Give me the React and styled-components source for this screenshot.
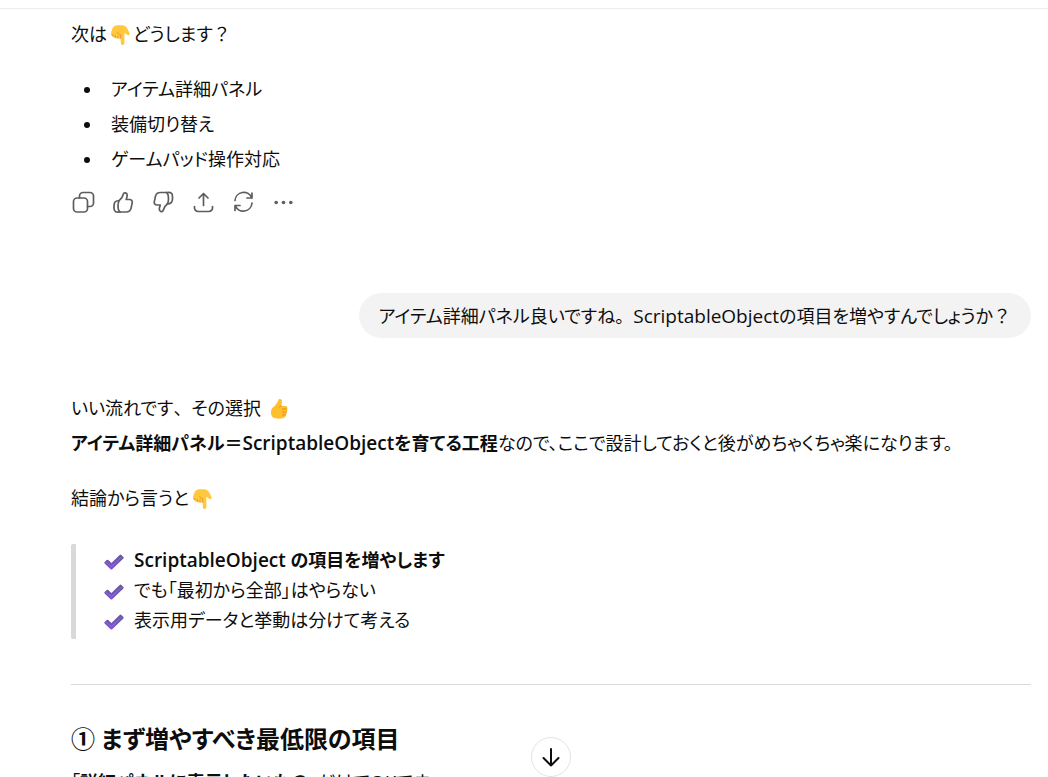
import React from "react"
import styled, { createGlobalStyle } from "styled-components"

const colors = {
  text: "#0d0d0d",
  icon: "#5d5d5d",
  bubble: "#f3f3f3",
  line: "#ededed",
  rule: "#d9d9d9",
  ring: "#e3e3e3",
  white: "#ffffff",
}

const GlobalStyle = createGlobalStyle`
  * {
    box-sizing: border-box;
  }

  body {
    margin: 0;
    background: ${colors.white};
    color: ${colors.text};
    font-family: "Open Sans", "Noto Sans CJK JP", sans-serif;
    font-size: 18px;
    line-height: 35px;
    font-feature-settings: "palt";
  }
`

const Page = styled.div`
  display: flex;
  flex-direction: column;
  height: 100vh;
  overflow: hidden;
  position: relative;
`

const TopBar = styled.header`
  flex: none;
  height: 9px;
  border-bottom: 1px solid ${colors.line};
`

const Thread = styled.main`
  flex: 1;
  min-height: 0;
  overflow: hidden;
  padding: 8px 17px 0 71px;
`

const Message = styled.article`
  display: flex;
  flex-direction: column;
`

const Paragraph = styled.p`
  margin: 0 0 20px;
`

const List = styled.ul`
  margin: 0;
  padding-left: 32px;

  & > li {
    padding-left: 8px;
  }
`

const Actions = styled.div`
  display: flex;
  margin: 5px 0 0 -8px;
`

const IconButton = styled.button`
  display: flex;
  align-items: center;
  justify-content: center;
  width: 40px;
  height: 40px;
  padding: 0;
  border: 0;
  border-radius: 8px;
  background: none;
  color: ${colors.icon};
  cursor: pointer;

  &:hover {
    background: ${colors.bubble};
  }
`

const Bubble = styled.div`
  align-self: flex-end;
  margin: 71px 0 53px;
  padding: 8px 20px 7px;
  border-radius: 23px;
  background: ${colors.bubble};
  line-height: 30px;
`

const Quote = styled.blockquote`
  margin: 8px 0 45px;
  padding: 1px 0 4px 28px;
  border-left: 5px solid ${colors.rule};
  border-radius: 2px;
  line-height: 30px;
`

const QuoteLine = styled.div`
  display: flex;
  align-items: center;
  gap: 10px;
`

const CheckMark = styled.svg`
  flex: none;
  width: 20px;
  height: 16px;
  margin-top: 4px;
`

const Rule = styled.hr`
  width: 100%;
  margin: 0 0 36px;
  border: 0;
  border-top: 1px solid ${colors.rule};
`

const Heading = styled.h2`
  margin: 0 0 8px;
  font-size: 24px;
  font-weight: 600;
  line-height: 36px;
`

const Strong = styled.strong`
  font-weight: 600;
`

const Latin = styled.span`
  font-size: 19px;
`

const Wide = styled.span`
  font-feature-settings: normal;
`

const Emoji = styled.svg`
  width: 22px;
  height: 22px;
  margin: 0 2px;
  vertical-align: -5px;
`

const ScrollButton = styled.button`
  position: absolute;
  bottom: 0;
  left: calc(50% + 27px);
  transform: translateX(-50%);
  display: flex;
  align-items: center;
  justify-content: center;
  width: 40px;
  height: 40px;
  padding: 0;
  border: 1px solid ${colors.ring};
  border-radius: 50%;
  background: ${colors.white};
  color: ${colors.text};
  cursor: pointer;
`

const Icon = ({ children, size = 24 }) => (
  <svg
    width={size}
    height={size}
    viewBox="0 0 24 24"
    fill="none"
    stroke="currentColor"
    strokeWidth="1.7"
    strokeLinecap="round"
    strokeLinejoin="round"
    aria-hidden="true"
  >
    {children}
  </svg>
)

const PointDown = () => (
  <Emoji viewBox="0 0 22 22" role="img" aria-label="下">
    <path
      fill="#ffc83d"
      d="M3 5.500C4 2.500 6 1.200 9 1.200h3.500c3 0 5 1.600 6.200 4l1.800 3.900c.8 1.700-1 2.800-2.300 1.700L15.400 8.700v10.600c0 2.300-3.400 2.300-3.500 0L11.600 14c-.8.900-2.100.9-2.800.2-.9.500-2 .3-2.500-.5-1.200.4-2.300-.3-2.500-1.400C2.200 12 1.700 10.900 2 9.500z"
    />
    <path
      fill="none"
      stroke="#e68a2e"
      strokeWidth="0.8"
      strokeLinecap="round"
      d="M3.900 12.200v-1.700M6.400 13.500v-2M9 14v-2M11.700 14.500v-3.700c-2-.5-2.900-1.400-3-2.500"
    />
  </Emoji>
)

const ThumbsUp = () => (
  <Emoji viewBox="0 0 22 22" role="img" aria-label="いいね">
    <path
      fill="#ffc02e"
      d="M10.300 2.400c.4-2.300 4-1.700 3.800 1.200-.1 1.600-.6 3-.9 4.400h4.300c2 0 2.400 2.100 1.300 3 1 1 .8 2.500-.3 3.100.7 1.100.2 2.300-.8 2.700.4 1.500-.5 2.900-2.200 3.300-2.700.8-7.500.9-9.800-.3C2.300 18.100 2.300 12 4.500 9.800c2.100-1.900 4.500-4 5.800-7.400z"
    />
    <path
      fill="none"
      stroke="#e88b24"
      strokeLinecap="round"
      d="M13.200 8c-.8 0-1.600.4-2 1.100M18.800 11h-4.500M18.500 14.100h-4.200M17.700 16.900h-3.200"
    />
  </Emoji>
)

const Check = () => (
  <CheckMark viewBox="0 0 20 16" role="img" aria-label="チェック">
    <defs>
      <linearGradient id="check" x1="0" y1="0" x2="0" y2="1">
        <stop offset="0" stopColor="#635994" />
        <stop offset="1" stopColor="#8250dc" />
      </linearGradient>
    </defs>
    <path
      fill="url(#check)"
      d="M.6 8.100 2.700 6q.8-.6 1.600 0L7.400 9 15.700.9q.8-.7 1.600 0L19.400 3q.6.700 0 1.400L8.200 15.200q-.8.600-1.600 0L.6 9.400q-.6-.6 0-1.300z"
    />
    <path fill="none" stroke="#8f7fc6" strokeWidth="0.8" d="m2 8 5.400 4.700L17.600 3" />
  </CheckMark>
)

const actions = [
  {
    label: "コピー",
    icon: (
      <>
        <rect x="2.500" y="8" width="14" height="14" rx="3.500" />
        <path d="M8.500 8V6A3.500 3.500 0 0 1 12 2.500h7A3.500 3.500 0 0 1 22.500 6v7a3.500 3.500 0 0 1-3.500 3.500h-2.500" />
      </>
    ),
  },
  {
    label: "良い回答",
    icon: (
      <>
        <path d="M8 22c-3.500.5-5-1-5-4v-2.300c0-3.200 1.500-5.200 5.200-5.200 2-1.400 3.600-4 4.300-6.700.4-1.600 3.700-1.200 3.700 1.400 0 1.600-.6 3.100-1 4.300h3.300c2 0 3.100 1.500 2.700 3.400L20 18.400c-.6 2.600-2.300 3.600-5 3.600z" />
        <path d="M8.200 10.500c-1 1.500-1.200 3-1.200 5 0 2.800.2 5.300 2 6.500" />
      </>
    ),
  },
  {
    label: "悪い回答",
    icon: (
      <>
        <path d="M16.500 2.500c3.500-.5 5 1 5 4v2.300c0 3.200-1.500 5.200-5.200 5.200-2 1.400-3.600 4-4.300 6.700-.4 1.600-3.700 1.200-3.700-1.400 0-1.600.6-3.100 1-4.300H6c-2 0-3.100-1.500-2.700-3.400l1.200-5.500c.6-2.600 2.300-3.600 5-3.600z" />
        <path d="M16.300 14c1-1.500 1.200-3 1.200-5 0-2.800-.2-5.300-2-6.500" />
      </>
    ),
  },
  {
    label: "共有",
    icon: (
      <>
        <path d="M12.500 15.500v-12M8 8l4.500-4.500L17 8" />
        <path d="M3.500 16.500V18A3.500 3.500 0 0 0 7 21.500h11a3.500 3.500 0 0 0 3.500-3.500v-1.500" />
      </>
    ),
  },
  {
    label: "再生成",
    icon: (
      <>
        <path d="M4 10.500A8.700 8.700 0 0 1 20.800 8M21 3v5h-5" />
        <path d="M21 13A8.700 8.700 0 0 1 4.200 15.500M4 20.500v-5h5" />
      </>
    ),
  },
  {
    label: "その他",
    icon: (
      <g fill="currentColor" stroke="none">
        <circle cx="5.200" cy="12.500" r="1.800" />
        <circle cx="12.500" cy="12.500" r="1.800" />
        <circle cx="19.800" cy="12.500" r="1.800" />
      </g>
    ),
  },
]

const App = () => {
  return (
    <Page>
      <GlobalStyle />
      <TopBar />
      <Thread>
        <Message>
          <Paragraph>
            次は
            <PointDown />
            どうします<Wide>？</Wide>
          </Paragraph>
          <List>
            <li>アイテム詳細パネル</li>
            <li>装備切り替え</li>
            <li>ゲームパッド操作対応</li>
          </List>
          <Actions>
            {actions.map(({ label, icon }) => (
              <IconButton key={label} type="button" aria-label={label}>
                <Icon>{icon}</Icon>
              </IconButton>
            ))}
          </Actions>
        </Message>
        <Message>
          <Bubble>
            アイテム詳細パネル良いですね<Wide>。</Wide>
            <Latin>ScriptableObject</Latin>
            の項目を増やすんでしょうか<Wide>？</Wide>
          </Bubble>
        </Message>
        <Message>
          <Paragraph>
            いい流れです<Wide>、</Wide>その選択 <ThumbsUp />
            <br />
            <Strong>
              アイテム詳細パネル＝<Latin>ScriptableObject</Latin>を育てる工程
            </Strong>
            なので、ここで設計しておくと後がめちゃくちゃ楽になります。
          </Paragraph>
          <Paragraph>
            結論から言うと
            <PointDown />
          </Paragraph>
          <Quote>
            <QuoteLine>
              <Check />
              <Strong>
                <Latin>ScriptableObject</Latin> の項目を増やします
              </Strong>
            </QuoteLine>
            <QuoteLine>
              <Check />
              でも「最初から全部」はやらない
            </QuoteLine>
            <QuoteLine>
              <Check />
              表示用データと挙動は分けて考える
            </QuoteLine>
          </Quote>
          <Rule />
          <Heading>① まず増やすべき最低限の項目</Heading>
          <Paragraph>
            「<Strong>詳細パネルに表示したいもの</Strong>」だけで
            <Latin>OK</Latin>です。
          </Paragraph>
        </Message>
      </Thread>
      <ScrollButton type="button" aria-label="一番下へ">
        <Icon>
          <path strokeWidth="2" d="M12 4v16.500M4.500 13l7.500 7.500 7.500-7.500" />
        </Icon>
      </ScrollButton>
    </Page>
  )
}

export default App
